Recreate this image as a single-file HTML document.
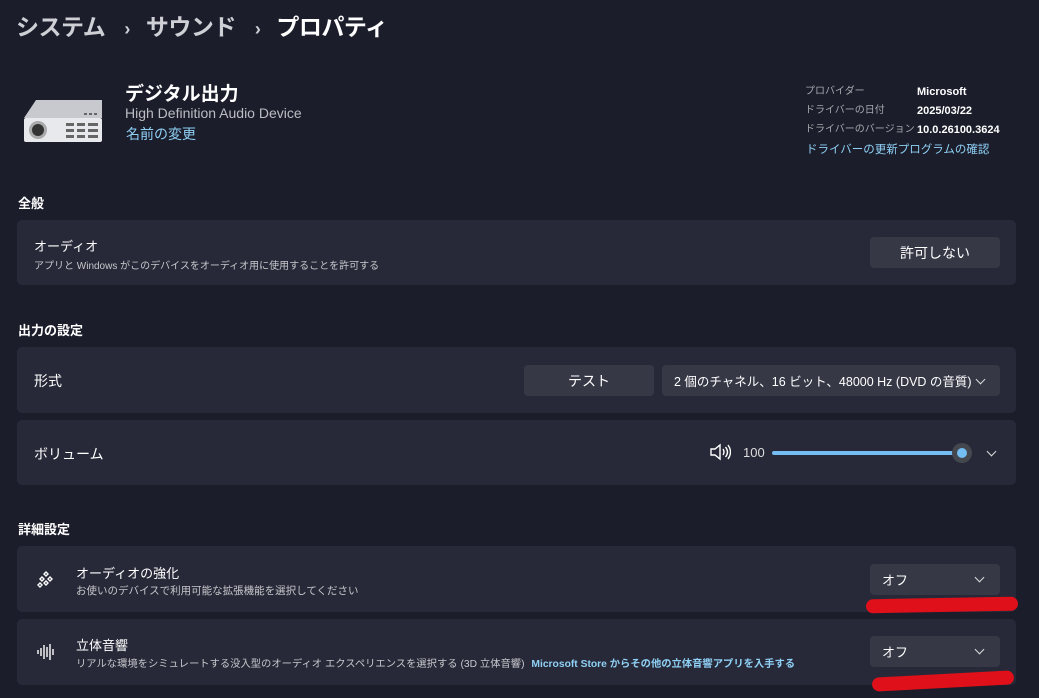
<!DOCTYPE html>
<html><head><meta charset="utf-8"><style>
*{margin:0;padding:0;box-sizing:border-box}
body{width:1039px;height:698px;overflow:hidden;background:#1b1d2b;font-family:"Liberation Sans","Noto Sans CJK JP",sans-serif;color:#fff;position:relative}
.a{position:absolute;white-space:nowrap}
.card{position:absolute;left:17px;width:999px;background:#272938;border-radius:5px}
.t{font-size:14px;color:#fff}
.s{font-size:12px;color:#c8c8cc}
.btn{position:absolute;background:#363846;border-radius:4px;font-size:14px;color:#fff;display:flex;align-items:center;justify-content:center;white-space:nowrap}
.sec{position:absolute;left:18px;font-size:13px;font-weight:bold}
.chev{position:absolute;width:7px;height:7px;border-right:1.5px solid #ddd;border-bottom:1.5px solid #ddd;transform:rotate(45deg)}
.red{position:absolute;height:14px;background:#e0101a;border-radius:8px}
</style></head><body>
<div class="a" style="left:16px;top:8px;font-size:23px;font-weight:bold;color:#cfd0d6;letter-spacing:-0.5px">システム<span style="font-size:18px;margin:0 16px 0 19px">›</span>サウンド<span style="font-size:18px;margin:0 16px 0 19px">›</span><span style="color:#fff">プロパティ</span></div>

<svg class="a" style="left:22px;top:96px" width="82" height="48" viewBox="0 0 82 48">
<path d="M2 22 L14 4 L80 4 L80 22 Z" fill="#c8c9ce"/>
<rect x="2" y="22" width="78" height="24" rx="2" fill="#e8e9ec"/>
<circle cx="16" cy="34" r="9" fill="#aaa"/><circle cx="16" cy="34" r="6" fill="#333"/>
<g fill="#666"><rect x="44" y="27" width="8" height="3"/><rect x="55" y="27" width="8" height="3"/><rect x="66" y="27" width="10" height="3"/>
<rect x="44" y="33" width="8" height="3"/><rect x="55" y="33" width="8" height="3"/><rect x="66" y="33" width="10" height="3"/>
<rect x="44" y="39" width="8" height="3"/><rect x="55" y="39" width="8" height="3"/><rect x="66" y="39" width="10" height="3"/>
<rect x="67" y="17" width="3" height="2"/><rect x="72" y="17" width="3" height="2"/><rect x="62" y="17" width="3" height="2"/></g>
</svg>
<div class="a" style="left:125px;top:79px;font-size:19px;font-weight:bold">デジタル出力</div>
<div class="a" style="left:125px;top:105px;font-size:14px;color:#bcbcc2">High Definition Audio Device</div>
<div class="a" style="left:126px;top:124px;font-size:14px;color:#8fd0f5">名前の変更</div>

<div class="a s" style="left:805px;top:82px;line-height:19px;color:#a8a8ae;font-size:10px">プロバイダー<br>ドライバーの日付<br>ドライバーのバージョン</div>
<div class="a" style="left:917px;top:83px;line-height:19px;font-size:11px;font-weight:bold">Microsoft<br>2025/03/22<br>10.0.26100.3624</div>
<div class="a" style="left:806px;top:141px;font-size:11.5px;color:#8fd0f5">ドライバーの更新プログラムの確認</div>

<div class="sec" style="top:193px">全般</div>
<div class="card" style="top:220px;height:65px">
<div class="a t" style="left:17px;top:16px;font-size:13px">オーディオ</div>
<div class="a s" style="left:17px;top:37px;font-size:10px">アプリと Windows がこのデバイスをオーディオ用に使用することを許可する</div>
<div class="btn" style="left:853px;top:17px;width:130px;height:31px">許可しない</div>
</div>

<div class="sec" style="top:320px">出力の設定</div>
<div class="card" style="top:347px;height:66px">
<div class="a t" style="left:17px;top:24px">形式</div>
<div class="btn" style="left:507px;top:18px;width:130px;height:31px">テスト</div>
<div class="btn" style="left:645px;top:18px;width:338px;height:31px;justify-content:flex-start;padding-left:12px;font-size:12.5px">2 個のチャネル、16 ビット、48000 Hz (DVD の音質)</div>
<div class="chev" style="left:960px;top:29px"></div>
</div>
<div class="card" style="top:420px;height:65px">
<div class="a t" style="left:17px;top:24px">ボリューム</div>
<svg class="a" style="left:692px;top:23px" width="22" height="18" viewBox="0 0 22 18"><path d="M2 6h4l5-4v14l-5-4H2z" fill="none" stroke="#fff" stroke-width="1.4"/><path d="M14 6q2 3 0 6M16.5 4q4 5 0 10M19 2q5 7 0 14" fill="none" stroke="#fff" stroke-width="1.4"/></svg>
<div class="a" style="left:726px;top:25px;font-size:13px;color:#ddd">100</div>
<div class="a" style="left:755px;top:31px;width:190px;height:4px;background:#73bdf3;border-radius:2px"></div>
<div class="a" style="left:935px;top:23px;width:20px;height:20px;border-radius:50%;background:#45474f"></div>
<div class="a" style="left:940px;top:28px;width:10px;height:10px;border-radius:50%;background:#73bdf3"></div>
<div class="chev" style="left:971px;top:28px"></div>
</div>

<div class="sec" style="top:519px">詳細設定</div>
<div class="card" style="top:546px;height:66px">
<svg class="a" style="left:19px;top:24px" width="20" height="20" viewBox="0 0 20 20" fill="none" stroke="#fff" stroke-width="1.4"><path d="M10 2l2 2-2 2-2-2z M6 7l2 2-2 2-2-2z M14 7l2 2-2 2-2-2z M10 11l2 2-2 2-2-2z M4 13l2 2-2 2-2-2z"/></svg>
<div class="a t" style="left:59px;top:17px;font-size:13px">オーディオの強化</div>
<div class="a s" style="left:59px;top:37px;font-size:10.5px">お使いのデバイスで利用可能な拡張機能を選択してください</div>
<div class="btn" style="left:853px;top:18px;width:130px;height:31px;justify-content:flex-start;padding-left:12px;font-size:13px">オフ</div>
<div class="chev" style="left:959px;top:28px"></div>
</div>
<div class="card" style="top:619px;height:66px">
<svg class="a" style="left:19px;top:23px" width="20" height="20" viewBox="0 0 20 20" stroke="#fff" stroke-width="1.4"><path d="M2 8v4M5 6v8M8 3v14M11 5v10M14 2v16M17 7v6"/></svg>
<div class="a t" style="left:59px;top:16px;font-size:13px">立体音響</div>
<div class="a s" style="left:59px;top:36px;font-size:10.3px">リアルな環境をシミュレートする没入型のオーディオ エクスペリエンスを選択する (3D 立体音響) <b style="color:#8fd0f5;margin-left:4px">Microsoft Store からその他の立体音響アプリを入手する</b></div>
<div class="btn" style="left:853px;top:17px;width:130px;height:31px;justify-content:flex-start;padding-left:12px;font-size:13px">オフ</div>
<div class="chev" style="left:959px;top:27px"></div>
</div>
<div class="red" style="left:866px;top:598px;width:152px;transform:rotate(-1deg)"></div>
<div class="red" style="left:872px;top:674px;width:142px;transform:rotate(-3deg)"></div>
</body></html>
